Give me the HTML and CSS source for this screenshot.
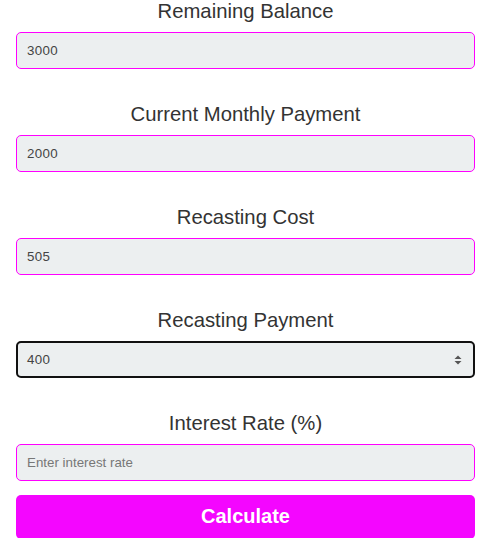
FILE: index.html
```html
<!DOCTYPE html>
<html lang="en">
<head>
  <meta charset="UTF-8" />
  <meta name="viewport" content="width=device-width, initial-scale=1.0" />
  <title>Mortgage Recast Calculator</title>
  <link rel="stylesheet" href="styles.css">
</head>
<body>
  <form id="recast-form" class="calc-form" onsubmit="return false">
    <div class="field">
      <label for="balance">Remaining Balance</label>
      <input type="text" id="balance" value="3000" />
    </div>

    <div class="field">
      <label for="monthly">Current Monthly Payment</label>
      <input type="text" id="monthly" value="2000" />
    </div>

    <div class="field">
      <label for="cost">Recasting Cost</label>
      <input type="text" id="cost" value="505" />
    </div>

    <div class="field">
      <label for="payment">Recasting Payment</label>
      <div class="select-box" id="payment" tabindex="0">
        <span>400</span>
        <svg class="spin" width="10" height="12" viewBox="0 0 10 12">
          <path d="M5 1.5 L8.5 5 L1.5 5 Z" fill="#555" />
          <path d="M1.5 7 L8.5 7 L5 10.5 Z" fill="#555" />
        </svg>
      </div>
    </div>

    <div class="field">
      <label for="rate">Interest Rate (%)</label>
      <input type="text" id="rate" placeholder="Enter interest rate" />
    </div>

    <button type="submit" id="calcButton">Calculate</button>
  </form>
</body>
</html>
```

FILE: styles.css
```css
body {
  margin: 0;
  font-family: "Liberation Sans", Arial, sans-serif;
  color: #333;
  background: #fff;
}

.calc-form {
  display: flex;
  flex-direction: column;
  margin: 0 6px 0 16px;
}

.field {
  display: flex;
  flex-direction: column;
  gap: 9px;
  margin-bottom: 34px;
}

.field:last-of-type {
  margin-bottom: 14px;
}

label {
  text-align: center;
  font-size: 20.3px;
  line-height: 23px;
  color: #333;
}

input[type="text"],
.select-box {
  box-sizing: border-box;
  height: 37px;
  width: 100%;
  padding: 0 10px;
  font-family: inherit;
  font-size: 13.33px;
  letter-spacing: 0.3px;
  color: #444;
  background: #eceff0;
  border: 1px solid #f0f;
  border-radius: 5px;
  outline: none;
}

input::placeholder {
  color: #777;
  letter-spacing: 0;
}

.select-box {
  display: flex;
  align-items: center;
  justify-content: space-between;
  border: 2px solid #111;
  padding: 0 9px 0 9px;
}

.spin {
  display: block;
  margin-right: 1px;
}

button {
  height: 44px;
  width: 100%;
  padding-bottom: 2px;
  border: none;
  border-radius: 5px;
  background-color: #f406ff;
  color: #fff;
  font-family: inherit;
  font-size: 20px;
  font-weight: bold;
  cursor: pointer;
}
```
